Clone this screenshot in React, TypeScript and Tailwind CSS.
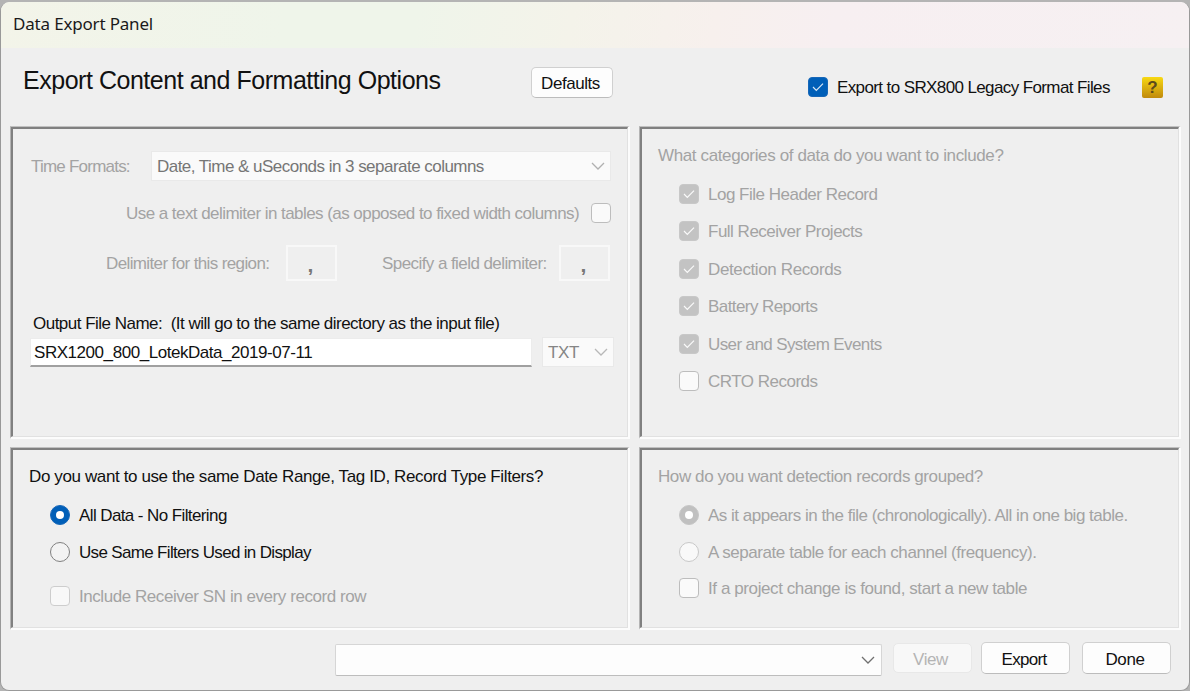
import { ReactNode } from "react";
import clsx from "clsx";

const muted = "text-[#a3a3a3]";

function Txt({ children, className }: { children: ReactNode; className?: string }) {
  return <span className={clsx("-mb-px shrink-0 pt-px leading-5 whitespace-pre", className)}>{children}</span>;
}

function Chevron({ className }: { className?: string }) {
  return (
    <svg viewBox="0 0 14 8" className={clsx("h-2 w-3.5 shrink-0 fill-none", className)}>
      <path d="M1 1 L7 7 L13 1" stroke="currentColor" strokeWidth="1.3" />
    </svg>
  );
}

function Check({ state }: { state: "on" | "disabled" | "empty" | "faint" }) {
  return (
    <span
      className={clsx(
        "flex size-5 shrink-0 items-center justify-center rounded-[4px] border",
        state === "on" && "border-[#1767b8] bg-[#005fb8] text-[#d6e6f5]",
        state === "disabled" && "border-[#c8c8c8] bg-[#c3c3c3] text-[#fafafa]",
        state === "empty" && "border-[#bdbdbd] bg-[#fafafa]",
        state === "faint" && "border-[#cdcdcd] bg-[#f8f8f8]",
      )}
    >
      {(state === "on" || state === "disabled") && (
        <svg viewBox="0 0 12 10" className="h-2.5 w-3 fill-none">
          <path d="M1 5 L4.3 8.3 L11 1.6" stroke="currentColor" strokeWidth="1.2" />
        </svg>
      )}
    </span>
  );
}

function Radio({ state }: { state: "on" | "off" | "disabledOn" | "disabledOff" }) {
  return (
    <span
      className={clsx(
        "flex size-5 shrink-0 items-center justify-center rounded-full border",
        state === "on" && "border-[#1767b8] bg-[#005fb8]",
        state === "off" && "border-[#808080] bg-[#f3f3f3]",
        state === "disabledOn" && "border-[#c6c6c6] bg-[#c0c0c0]",
        state === "disabledOff" && "border-[#c8c8c8] bg-[#f9f9f9]",
      )}
    >
      {(state === "on" || state === "disabledOn") && <span className="size-2 rounded-full bg-white" />}
    </span>
  );
}

function Panel({ children, className }: { children: ReactNode; className?: string }) {
  return (
    <section className={clsx("border-t border-r-2 border-b-2 border-l border-t-[#c0c0c0] border-r-[#fcfcfc] border-b-[#fcfcfc] border-l-[#b4b4b4]", className)}>
      <div className="flex h-full flex-col border-t-2 border-r border-b border-l-2 border-t-[#808080] border-r-[#e1e1e1] border-b-[#e1e1e1] border-l-[#808080]">
        {children}
      </div>
    </section>
  );
}

function Button({ children, className }: { children: ReactNode; className?: string }) {
  return (
    <button className={clsx("flex shrink-0 items-center justify-center rounded-[5px] border border-[#d0d0d0] border-b-[#bcbcbc] bg-[#fdfdfd]", className)}>
      {children}
    </button>
  );
}

function DelimiterBox() {
  return (
    <div className="flex h-9 w-[51px] items-center justify-center border-2 border-[#f8f8f8] pt-1 pr-0.5 text-[21px] font-bold text-[#777]">,</div>
  );
}

const categories = [
  { label: "Log File Header Record", on: true, tracking: "tracking-[-0.5px]" },
  { label: "Full Receiver Projects", on: true, tracking: "tracking-[-0.5px]" },
  { label: "Detection Records", on: true, tracking: "tracking-[-0.38px]" },
  { label: "Battery Reports", on: true, tracking: "tracking-[-0.58px]" },
  { label: "User and System Events", on: true, tracking: "tracking-[-0.61px]" },
  { label: "CRTO Records", on: false, tracking: "tracking-[-0.5px]" },
];

export default function App() {
  return (
    <div className="h-[691px] w-[1190px] bg-[#b4b4b4] pt-0.5 font-['Liberation_Sans',Arial,sans-serif] text-[17px] text-[#111]">
      <div className="flex h-[689px] flex-col overflow-hidden rounded-[9px] border-x border-b border-[#999] bg-[#efefef]">
        <header className="flex h-[46px] shrink-0 items-start bg-[linear-gradient(100deg,#f3f4e9_0%,#eff5ea_24%,#eff5ea_35%,#f4f3ea_48%,#f7f0ed_60%,#f7eff1_70%,#f6f0f2_100%)] pt-[11px] pl-3">
          <Txt className="font-['Noto_Sans',sans-serif] text-[17px] tracking-[-0.18px] text-[#1a1a1a]">Data Export Panel</Txt>
        </header>

        <div className="flex h-[78px] shrink-0 items-start">
          <h1 className="mt-[17px] ml-[22px] w-[508px] shrink-0 text-[25px] leading-[30px] tracking-[-0.47px] whitespace-pre">
            Export Content and Formatting Options
          </h1>
          <Button className="mt-[19px] h-[31px] w-[82px] pr-[3px]">
            <Txt className="tracking-[-0.45px]">Defaults</Txt>
          </Button>
          <label className="mt-[29px] ml-[195px] flex w-[334px] shrink-0 items-center gap-[9px]">
            <Check state="on" />
            <Txt className="tracking-[-0.61px]">Export to SRX800 Legacy Format Files</Txt>
          </label>
          <button className="mt-[29px] flex h-[21px] w-[21px] shrink-0 items-center justify-center rounded-[2px] bg-linear-to-b from-[#f8d912] to-[#c08a0c] text-[17px] leading-none font-bold text-[#5c4a1c]">
            ?
          </button>
        </div>

        <main className="grid shrink-0 grid-cols-[620px_542px] grid-rows-[313px_183px] gap-x-[9px] gap-y-2 pl-[9px]">
          <Panel>
            <div className="mt-[22px] flex items-center pl-[18px]">
              <Txt className={clsx("w-[120px] tracking-[-0.78px]", muted)}>Time Formats:</Txt>
              <div className="flex h-[30px] w-[460px] items-center justify-between border border-[#e9e9e9] bg-[#fafafa] px-[5px]">
                <Txt className="tracking-[-0.53px] text-[#767676]">Date, Time &amp; uSeconds in 3 separate columns</Txt>
                <Chevron className="text-[#b0b0b0]" />
              </div>
            </div>
            <label className="mt-[22px] flex items-center gap-3 pl-[113px]">
              <Txt className={clsx("w-[453px] tracking-[-0.55px]", muted)}>
                Use a text delimiter in tables (as opposed to fixed width columns)
              </Txt>
              <Check state="empty" />
            </label>
            <div className="mt-[22px] flex items-center pl-[93px]">
              <Txt className={clsx("w-[180px] tracking-[-0.62px]", muted)}>Delimiter for this region:</Txt>
              <DelimiterBox />
              <Txt className={clsx("ml-[45px] w-[177px] tracking-[-0.57px]", muted)}>Specify a field delimiter:</Txt>
              <DelimiterBox />
            </div>
            <Txt className="mt-8 ml-5 tracking-[-0.51px]">Output File Name:  (It will go to the same directory as the input file)</Txt>
            <div className="mt-[4px] flex items-start pl-[17px]">
              <div className="mt-px flex h-[29px] w-[502px] items-center border border-b-2 border-[#ececec] border-b-[#a0a0a0] bg-white pl-[3px]">
                <Txt className="tracking-[-0.45px]">SRX1200_800_LotekData_2019-07-11</Txt>
              </div>
              <div className="ml-2.5 flex h-[30px] w-[72px] items-center justify-between border border-[#e9e9e9] bg-[#fafafa] px-[5px]">
                <Txt className="tracking-[-0.3px] text-[#858585]">TXT</Txt>
                <Chevron className="text-[#b8b8b8]" />
              </div>
            </div>
          </Panel>

          <Panel>
            <Txt className={clsx("mt-4 ml-4 tracking-[-0.37px]", muted)}>What categories of data do you want to include?</Txt>
            <div className="mt-2.5 flex flex-col pl-[37px]">
              {categories.map((c) => (
                <label key={c.label} className="flex h-[37.5px] items-center gap-[9px]">
                  <Check state={c.on ? "disabled" : "empty"} />
                  <Txt className={clsx(c.tracking, muted)}>{c.label}</Txt>
                </label>
              ))}
            </div>
          </Panel>

          <Panel>
            <Txt className="mt-4 ml-4 tracking-[-0.38px]">Do you want to use the same Date Range, Tag ID, Record Type Filters?</Txt>
            <div className="mt-[19px] flex flex-col pl-[37px]">
              <label className="flex items-center gap-[9px]">
                <Radio state="on" />
                <Txt className="tracking-[-0.6px]">All Data - No Filtering</Txt>
              </label>
              <label className="mt-[17px] flex items-center gap-[9px]">
                <Radio state="off" />
                <Txt className="tracking-[-0.67px]">Use Same Filters Used in Display</Txt>
              </label>
              <label className="mt-6 flex items-center gap-[9px]">
                <Check state="faint" />
                <Txt className={clsx("tracking-[-0.44px]", muted)}>Include Receiver SN in every record row</Txt>
              </label>
            </div>
          </Panel>

          <Panel>
            <Txt className={clsx("mt-4 ml-4 tracking-[-0.41px]", muted)}>How do you want detection records grouped?</Txt>
            <div className="mt-[19px] flex flex-col pl-[37px]">
              <label className="flex items-center gap-[9px]">
                <Radio state="disabledOn" />
                <Txt className={clsx("tracking-[-0.5px]", muted)}>As it appears in the file (chronologically). All in one big table.</Txt>
              </label>
              <label className="mt-[17px] flex items-center gap-[9px]">
                <Radio state="disabledOff" />
                <Txt className={clsx("tracking-[-0.44px]", muted)}>A separate table for each channel (frequency).</Txt>
              </label>
              <label className="mt-4 flex items-center gap-[9px]">
                <Check state="empty" />
                <Txt className={clsx("tracking-[-0.41px]", muted)}>If a project change is found, start a new table</Txt>
              </label>
            </div>
          </Panel>
        </main>

        <footer className="flex items-start pt-3 pl-[334px]">
          <div className="mt-0.5 flex h-8 w-[547px] shrink-0 items-center justify-end rounded-[2px] border border-[#d6d6d6] border-b-[#bdbdbd] bg-[#fdfdfd] pr-1.5">
            <Chevron className="text-[#707070]" />
          </div>
          <button className="mt-px ml-[11px] flex h-[30px] w-[79px] shrink-0 items-center justify-center rounded-[5px] border border-[#e8e8e8] bg-[#f8f8f8] pt-px pr-1">
            <Txt className="tracking-[-0.4px] text-[#b4b4b4]">View</Txt>
          </button>
          <Button className="ml-[9px] h-8 w-[89px] pt-0.5 pr-[3px]">
            <Txt className="tracking-[-0.7px]">Export</Txt>
          </Button>
          <Button className="ml-3 h-8 w-[89px] pt-0.5 pr-[3px]">
            <Txt className="tracking-[-0.4px]">Done</Txt>
          </Button>
        </footer>
      </div>
    </div>
  );
}
